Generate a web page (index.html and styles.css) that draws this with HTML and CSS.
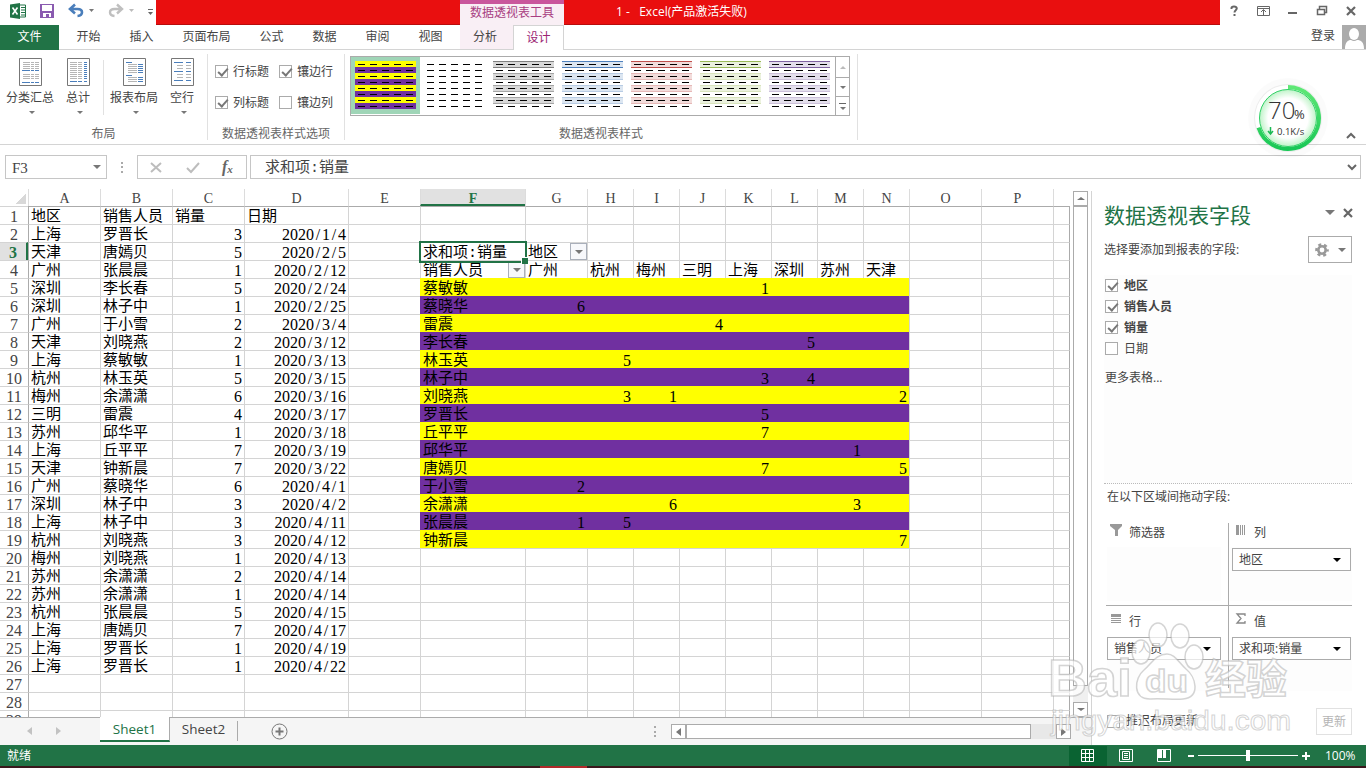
FILE: index.html
```html
<!DOCTYPE html>
<html lang="zh-CN">
<head>
  <meta charset="UTF-8" />
  <title>1 - Excel</title>
  <link rel="stylesheet" href="styles.css">
</head>
<body>

  <!-- Title bar -->
  <header class="titlebar">
    <div class="quick">
      <svg width="156" height="25" viewBox="0 0 156 25">
        <path d="M10 4.500 20 3v16l-10-1.500z" fill="#217346"/>
        <path d="M20 5h5.500v12H20" fill="#fff" stroke="#217346"/>
        <path d="M21 7.500h4M21 10h4M21 12.500h4M21 15h4" stroke="#217346"/>
        <path d="m12.500 7.500 5 7M17.500 7.500l-5 7" stroke="#fff" stroke-width="1.600"/>
        <path d="M40 4h14v14H40z" fill="#8a5bb0"/>
        <path d="M42 5h10v6H42zM43 13h8v4h-2v-3h-3v3h-3z" fill="#fff"/>
        <path d="M75 4.500 70 9l5 4.500M70.500 9h7c6 0 6 6.500 0 7" fill="none" stroke="#4a7ebb" stroke-width="2.600"/>
        <path d="M89 9h5l-2.500 3z" fill="#777"/>
        <path d="m117 4.500 5 4.500-5 4.500M121.500 9h-7c-6 0-6 6.500 0 7" fill="none" stroke="#bfbfbf" stroke-width="2.400"/>
        <path d="M129 9h5l-2.500 3z" fill="#bbb"/>
        <path d="M148 9.500h5" stroke="#666"/>
        <path d="M148 12h5l-2.500 3z" fill="#666"/>
      </svg>
    </div>
    <div class="caption">
      <div class="context-title">数据透视表工具</div>
      <span class="doc-name">1 -&nbsp;&nbsp; Excel(产品激活失败)</span>
    </div>
    <svg class="window-buttons" width="146" height="25" viewBox="1220 0 146 25" fill="none" stroke="#666">
      <path d="M1231.500 9V8q0-1.500 2.500-1.500t2.800 1.800c0 2-2.300 1.800-2.300 4.200M1234.500 14v2" stroke-width="2"/>
      <path d="M1257.500 6.500h12v9h-12zM1257.500 8.500h12M1263.500 15v-5M1261 12l2.500-2.500 2.500 2.500"/>
      <path d="M1288 13h9" stroke-width="2"/>
      <path d="M1317.500 9.500h7v5h-7zM1319.500 9V6.500h7v6H1325" stroke-width="1.500"/>
      <path d="m1347 7 8 8M1355 7l-8 8" stroke-width="2.200"/>
    </svg>
  </header>

  <nav class="tabs">
    <div class="tab file">文件</div>
    <div class="tab">开始</div>
    <div class="tab">插入</div>
    <div class="tab wide">页面布局</div>
    <div class="tab">公式</div>
    <div class="tab">数据</div>
    <div class="tab">审阅</div>
    <div class="tab">视图</div>
    <div class="tab context">分析</div>
    <div class="tab active">设计</div>
    <div class="login">登录</div>
    <svg class="avatar" width="24" height="24" viewBox="0 0 24 24">
      <path d="M0 0h24v24H0z" fill="#ababab"/>
      <ellipse cx="12" cy="9" rx="5" ry="6" fill="#fff"/>
      <path d="M3 24c0-7 3-9 6-9q3 2 6 0c4 0 7 2 7 9z" fill="#fff"/>
    </svg>
  </nav>

  <!-- Ribbon -->
  <section class="ribbon">
    <div class="group layout-group">
      <div class="group-body">
        <div class="big-btn w60">
          <svg width="23" height="28" viewBox="0 0 23 28"><path class="page" d="M.5.500h22v27H.5z"/><path class="lines" d="M4 4.500h7M12 4.500h3M16 4.500h4M4 6.500h7M12 6.500h3M16 6.500h4M4 8.500h7M12 8.500h3M16 8.500h4M4 10.500h7M12 10.500h3M16 10.500h4M4 16.500h7M12 16.500h3M16 16.500h4M4 18.500h7M12 18.500h3M16 18.500h4M4 20.500h7M12 20.500h3M16 20.500h4"/><path class="accent" d="M3 12.500h8M12 12.500h3M16 12.500h4M3 24.500h8M12 24.500h3M16 24.500h4"/></svg>
          <span>分类汇总</span><i class="down"></i>
        </div>
        <div class="big-btn w36">
          <svg width="23" height="28" viewBox="0 0 23 28"><path class="page" d="M.5.500h22v27H.5z"/><path class="lines" d="M3 4.500h7M11 4.500h4M3 6.500h7M11 6.500h4M3 8.500h7M11 8.500h4M3 10.500h7M11 10.500h4M3 12.500h7M11 12.500h4M3 14.500h7M11 14.500h4M3 16.500h7M11 16.500h4M3 18.500h7M11 18.500h4M3 20.500h7M11 20.500h4"/><path class="accent" d="M3 23.500h7M11 23.500h4M17 4.500h3M17 6.500h3M17 8.500h3M17 10.500h3M17 12.500h3M17 14.500h3M17 16.500h3M17 18.500h3M17 20.500h3M17 23.500h3"/></svg>
          <span>总计</span><i class="down"></i>
        </div>
        <div class="divider"></div>
        <div class="big-btn w60">
          <svg width="23" height="28" viewBox="0 0 23 28"><path class="page" d="M.5.500h22v27H.5z"/><path class="lines" d="M5 6.500h9M5 8.500h9M5 10.500h9M5 12.500h9M5 14.500h9M5 19.500h9M5 21.500h9M5 23.500h9"/><path class="accent" d="M3 4.500h6M3 17.500h6M15 6.500h5M15 8.500h5M15 10.500h5M15 12.500h5M15 14.500h5M15 19.500h5M15 21.500h5M15 23.500h5"/></svg>
          <span>报表布局</span><i class="down"></i>
        </div>
        <div class="big-btn w36">
          <svg width="23" height="28" viewBox="0 0 23 28"><path class="page" d="M.5.500h22v27H.5z"/><path class="lines" d="M6 7.500h6M15 7.500h5M6 10.500h6M15 10.500h5M6 16.500h6M15 16.500h5M6 19.500h6M15 19.500h5"/><path class="accent" d="M3 4.500h9M15 4.500h5M3 13.500h9M15 13.500h5M3 22.500h9M15 22.500h5"/></svg>
          <span>空行</span><i class="down"></i>
        </div>
      </div>
      <div class="group-label">布局</div>
    </div>

    <div class="group options-group">
      <div class="group-body options">
        <label><b class="check on"></b>行标题</label>
        <label><b class="check on"></b>镶边行</label>
        <label><b class="check on"></b>列标题</label>
        <label><b class="check"></b>镶边列</label>
      </div>
      <div class="group-label">数据透视表样式选项</div>
    </div>

    <div class="group styles-group">
      <div class="group-body">
        <div class="gallery">
          <div class="gallery-items" id="gallery"></div>
          <div class="gallery-scroll">
            <span class="off"><i class="up"></i></span>
            <span><i class="down"></i></span>
            <span><i class="down more"></i></span>
          </div>
        </div>
      </div>
      <div class="group-label">数据透视表样式</div>
    </div>
    <svg class="collapse" width="10" height="8" viewBox="0 0 10 8"><path d="m1 6 4-4 4 4" fill="none" stroke="#666" stroke-width="2"/></svg>
  </section>

  <!-- Formula bar -->
  <section class="formula-bar">
    <div class="name-box">F3<i class="down"></i></div>
    <div class="grip"></div>
    <div class="fx-box">
      <svg width="108" height="23" viewBox="0 0 108 23" fill="none" stroke="#bdbdbd" stroke-width="2">
        <path d="m13 7 10 9M23 7l-10 9"/>
        <path d="m49 12 4 4 8-9"/>
      </svg>
      <em>f<sub>x</sub></em>
    </div>
    <div class="formula"><span>求和项:销量</span>
      <svg width="10" height="8" viewBox="0 0 10 8"><path d="m1 2 4 4 4-4" fill="none" stroke="#666" stroke-width="2"/></svg>
    </div>
  </section>

  <main class="work">
    <div class="book">
      <div class="sheet-row">
        <div class="sheet" id="sheet"></div>
        <div class="vscroll">
          <span><i class="up"></i></span>
          <div class="thumb"></div>
          <div class="track"></div>
          <span><i class="down"></i></span>
        </div>
      </div>
      <div class="sheet-tabs">
        <div class="nav-arrows"><i class="left"></i><i class="right"></i></div>
        <div class="sheet-tab active">Sheet1</div>
        <div class="sheet-tab">Sheet2</div>
        <svg class="add" width="17" height="17" viewBox="0 0 17 17" fill="none" stroke="#777"><circle cx="8.500" cy="8.500" r="7.500"/><path d="M4.500 8.500h8M8.500 4.500v8" stroke-width="2"/></svg>
        <div class="grip"></div>
        <div class="hscroll">
          <span><i class="left"></i></span>
          <div class="thumb"></div>
          <div class="track"></div>
          <span><i class="right"></i></span>
        </div>
      </div>
    </div>

    <!-- Field list -->
    <aside class="pane">
      <div class="pane-head">
        <h2>数据透视表字段</h2>
        <i class="down wide"></i>
        <svg width="10" height="10" viewBox="0 0 10 10"><path d="m1 1 8 8M9 1 1 9" stroke="#666" stroke-width="2.200"/></svg>
      </div>
      <div class="pane-sub">
        <span>选择要添加到报表的字段:</span>
        <div class="gear">
          <svg width="14" height="14" viewBox="0 0 14 14" fill="none" stroke="#999"><circle cx="7" cy="7" r="3.700" stroke-width="2.600"/><circle cx="7" cy="7" r="5.600" stroke-width="2.400" stroke-dasharray="3 2.864" stroke-dashoffset="1.500"/></svg>
          <i class="down big"></i>
        </div>
      </div>
      <div class="fields">
        <label class="strong"><b class="check on"></b>地区</label>
        <label class="strong"><b class="check on"></b>销售人员</label>
        <label class="strong"><b class="check on"></b>销量</label>
        <label><b class="check"></b>日期</label>
        <p>更多表格...</p>
      </div>
      <div class="drag-title">在以下区域间拖动字段:</div>
      <div class="areas">
        <div class="area">
          <h3><svg width="12" height="12" viewBox="0 0 12 12"><path d="M0 0h12v2L8 6v6H5V6L0 2z" fill="#999"/></svg>筛选器</h3>
          <div class="drop"></div>
        </div>
        <div class="area">
          <h3><svg width="12" height="12" viewBox="0 0 12 12"><path d="M1 1h3v10H1zM5 1h1v10H5zM7 1h1v10H7zM9 1h1v10H9z" fill="#999"/></svg>列</h3>
          <div class="drop"><div class="pill">地区<i class="down big"></i></div></div>
        </div>
        <div class="area">
          <h3><svg width="12" height="12" viewBox="0 0 12 12"><path d="M1 1h10v3H1zM1 5h10v1H1zM1 7h10v1H1zM1 9h10v1H1z" fill="#999"/></svg>行</h3>
          <div class="drop"><div class="pill">销售人员<i class="down big"></i></div></div>
        </div>
        <div class="area">
          <h3><svg width="12" height="12" viewBox="0 0 12 12"><path d="M10 3V1H2l4 4.500L2 10h8V8" fill="none" stroke="#888" stroke-width="1.300"/></svg>值</h3>
          <div class="drop"><div class="pill">求和项:销量<i class="down big"></i></div></div>
        </div>
      </div>
      <div class="pane-foot">
        <label><b class="check"></b>推迟布局更新</label>
        <div class="update">更新</div>
      </div>
    </aside>
  </main>

  <footer class="status">
    <span>就绪</span>
    <svg width="245" height="21" viewBox="1068 745 245 21" fill="none" stroke="#fff">
      <path d="M1069 746h38v20h-38z" fill="#0a6332" stroke="none"/>
      <path d="M1081.500 749.500h12v12h-12zM1081.500 753.500h12M1081.500 757.500h12M1085.500 749.500v12M1089.500 749.500v12"/>
      <path d="M1119.500 749.500h13v12h-13zM1122.500 751.500h7v8h-7zM1124 753.500h4M1124 755.500h4M1124 757.500h4"/>
      <path d="M1157.500 749.500h13v12h-13z"/>
      <path d="M1158 750h4v8h-4zM1163 750h3v8h-3z" fill="#fff" stroke="none"/>
      <path d="M1188 756h6M1302 756h8M1306 752v8" stroke-width="2"/>
      <path d="M1198 755.500h100"/>
      <path d="M1246 750h4v11h-4z" fill="#fff" stroke="none"/>
    </svg>
    <span class="zoom">100%</span>
  </footer>
  <div class="taskbar"></div>

  <!-- Network speed ball -->
  <svg class="speed" width="84" height="84" viewBox="0 0 84 84">
    <defs>
      <linearGradient id="ring" x1="0" y1="0" x2="0" y2="1"><stop offset="0" stop-color="#5fe876"/><stop offset="1" stop-color="#18c755"/></linearGradient>
      <radialGradient id="ball"><stop offset=".7" stop-color="#fff"/><stop offset="1" stop-color="#bff3c8"/></radialGradient>
    </defs>
    <circle cx="42" cy="42" r="40" fill="#000" opacity=".015"/>
    <circle cx="42" cy="42" r="34" fill="#000" opacity=".06"/>
    <circle cx="42" cy="42" r="33" fill="#fff"/>
    <circle cx="42" cy="42" r="28.500" fill="url(#ball)" stroke="#2fd165"/>
    <path d="M42 11a31 31 0 1 1-29.500 40.600" fill="none" stroke="url(#ring)" stroke-width="4"/>
    <text class="speed-num" x="22" y="43">70</text>
    <text class="speed-pct" x="48" y="43">%</text>
    <path d="M24.500 51v6M22 55l2.500 3 2.500-3" fill="none" stroke="#1bb954" stroke-width="1.500"/>
    <text class="speed-rate" x="31" y="59">0.1K/s</text>
  </svg>

  <!-- Watermark -->
  <svg class="watermark" width="260" height="130" viewBox="1040 615 260 130">
    <g class="mark">
      <text x="1048" y="696" font-size="52" textLength="84" lengthAdjust="spacingAndGlyphs">Bai</text>
      <ellipse cx="1158" cy="635" rx="9" ry="12"/>
      <ellipse cx="1180" cy="636" rx="9" ry="12"/>
      <ellipse cx="1141" cy="652" rx="9" ry="12"/>
      <ellipse cx="1194" cy="657" rx="9" ry="12"/>
      <path d="M1167 654c8 0 11 8 19 15 10 8 15 28-3 30-8 1-24-1-32 0-19 1-17-21-7-29 8-7 12-16 23-16z"/>
      <text x="1145" y="692" font-size="32" textLength="43" lengthAdjust="spacingAndGlyphs">du</text>
      <text class="cjk" x="1205" y="694" font-size="41">经验</text>
      <text class="url" x="1051" y="730" font-size="28" textLength="240" lengthAdjust="spacingAndGlyphs">jingyan.baidu.com</text>
    </g>
  </svg>

  <script>
    // Source table, columns A-D
    const rows = [
      ["地区", "销售人员", "销量", "日期"],
      ["上海", "罗晋长", 3, "2020/1/4"],
      ["天津", "唐嫣贝", 5, "2020/2/5"],
      ["广州", "张晨晨", 1, "2020/2/12"],
      ["深圳", "李长春", 5, "2020/2/24"],
      ["深圳", "林子中", 1, "2020/2/25"],
      ["广州", "于小雪", 2, "2020/3/4"],
      ["天津", "刘晓燕", 2, "2020/3/12"],
      ["上海", "蔡敏敏", 1, "2020/3/13"],
      ["杭州", "林玉英", 5, "2020/3/15"],
      ["梅州", "余潇潇", 6, "2020/3/16"],
      ["三明", "雷震", 4, "2020/3/17"],
      ["苏州", "邱华平", 1, "2020/3/18"],
      ["上海", "丘平平", 7, "2020/3/19"],
      ["天津", "钟新晨", 7, "2020/3/22"],
      ["广州", "蔡晓华", 6, "2020/4/1"],
      ["深圳", "林子中", 3, "2020/4/2"],
      ["上海", "林子中", 3, "2020/4/11"],
      ["杭州", "刘晓燕", 3, "2020/4/12"],
      ["梅州", "刘晓燕", 1, "2020/4/13"],
      ["苏州", "余潇潇", 2, "2020/4/14"],
      ["苏州", "余潇潇", 1, "2020/4/14"],
      ["杭州", "张晨晨", 5, "2020/4/15"],
      ["上海", "唐嫣贝", 7, "2020/4/17"],
      ["上海", "罗晋长", 1, "2020/4/19"],
      ["上海", "罗晋长", 1, "2020/4/22"]
    ];

    // Pivot rows start at sheet row 5
    const pivot = [
      ["蔡敏敏", { K: 1 }],
      ["蔡晓华", { G: 6 }],
      ["雷震", { J: 4 }],
      ["李长春", { L: 5 }],
      ["林玉英", { H: 5 }],
      ["林子中", { K: 3, L: 4 }],
      ["刘晓燕", { H: 3, I: 1, N: 2 }],
      ["罗晋长", { K: 5 }],
      ["丘平平", { K: 7 }],
      ["邱华平", { M: 1 }],
      ["唐嫣贝", { K: 7, N: 5 }],
      ["于小雪", { G: 2 }],
      ["余潇潇", { I: 6, M: 3 }],
      ["张晨晨", { G: 1, H: 5 }],
      ["钟新晨", { N: 7 }]
    ];
    const heads = { F: "销售人员", G: "广州", H: "杭州", I: "梅州", J: "三明", K: "上海", L: "深圳", M: "苏州", N: "天津" };
    const cols = "ABCDEFGHIJKLMNOP".split("").concat("");

    let html = '<div class="corner"></div>';
    cols.forEach(c => html += `<div class="col-head${c === "F" ? " sel" : ""}">${c}</div>`);
    for (let r = 1; r <= 29; r++) {
      html += `<div class="row-head${r === 3 ? " sel" : ""}">${r}</div>`;
      cols.forEach((c, i) => {
        let text = "", cls = "cell", extra = "";
        if (r === 1) cls += " first-row";
        if (i === 0) cls += " first-col";
        if (c === "") cls += " last-col";
        if (i < 4 && rows[r - 1]) {
          text = rows[r - 1][i];
          if (r > 1 && i > 1) cls += " num";
          // keep the slashes on the same 8px pitch as the digits
          if (r > 1 && i === 3) text = text.replace(/\//g, "<s>/</s>");
        }
        if (r === 3 && c === "F") {
          text = "求和项:销量";
          extra = '<div class="selection"></div>';
        }
        if (r === 3 && c === "G") text = "地区";
        if (r === 4 && heads[c]) text = heads[c];
        if ((r === 3 && c === "G") || (r === 4 && c === "F")) extra = '<span class="filter"><i class="down"></i></span>';
        if (r >= 5 && r <= 19 && i >= 5 && i <= 13) {
          const p = pivot[r - 5];
          cls += r % 2 ? " yellow" : " purple";
          if (c === "F") text = p[0];
          else {
            text = p[1][c] || "";
            cls += " num";
          }
        }
        html += `<div class="${cls}">${text}${extra}</div>`;
      });
    }
    document.getElementById("sheet").innerHTML = html;

    // Style gallery thumbnails
    const names = ["picked", "plain", "grey", "blue", "red", "green", "violet"];
    document.getElementById("gallery").innerHTML = names.map(n =>
      `<div class="thumbnail ${n}">${'<div class="stripe"><i></i><i></i><i></i><i></i><i></i></div>'.repeat(8)}</div>`
    ).join("");
  </script>
</body>
</html>
```
FILE: styles.css
```css
* {
  box-sizing: border-box;
}
body {
  margin: 0;
  width: 1366px;
  height: 768px;
  overflow: hidden;
  position: relative;
  display: flex;
  flex-direction: column;
  background: #fff;
  color: #444;
  font-family: "Open Sans", "Noto Sans CJK SC", sans-serif;
  font-size: 12px;
  line-height: 16px;
}
svg {
  display: block;
  flex: none;
}

/* small triangles */
.down, .up, .left, .right {
  display: block;
  flex: none;
  width: 0;
  height: 0;
  border: 3px solid transparent;
}
.down {
  border-top-color: #777;
  border-bottom: 0;
}
.down.big {
  border-width: 4px 4px 0;
}
.down.wide {
  border-width: 5px 5px 0;
}
.up {
  border-bottom-color: #777;
  border-top: 0;
}
.left {
  border-width: 4px 5px 4px 0;
  border-right-color: #777;
}
.right {
  border-width: 4px 0 4px 5px;
  border-left-color: #777;
}

/* title bar */
.titlebar {
  display: flex;
  height: 25px;
}
.caption {
  width: 1064px;
  background: #e90f0f;
  border-bottom: 1px solid #b80c0c;
  display: flex;
  padding-left: 304px;
}
.context-title {
  width: 104px;
  height: 25px;
  background: #f9eff5;
  border-top: 4px solid #c9569c;
  color: #a83e82;
  text-align: center;
  line-height: 18px;
}
.doc-name {
  margin-left: 52px;
  color: #fff;
  line-height: 24px;
}

.tabs {
  display: flex;
  height: 25px;
  border-bottom: 1px solid #d4d4d4;
}
.tab {
  width: 53px;
  height: 24px;
  text-align: center;
  line-height: 24px;
}
.tab.wide {
  width: 77px;
}
.tab.file {
  width: 59px;
  height: 25px;
  margin-right: 3px;
  background: #217346;
  color: #fff;
}
.tab.context {
  margin-left: 3px;
  padding-right: 3px;
  background: #f9eff5;
}
.tab.active {
  width: 51px;
  height: 25px;
  background: #fff;
  border: 1px solid #d4d4d4;
  border-bottom: 0;
  color: #9b2372;
  line-height: 23px;
}
.login {
  margin-left: auto;
  margin-right: 7px;
  line-height: 22px;
}

/* ribbon */
.ribbon {
  display: flex;
  height: 95px;
  border-bottom: 1px solid #d4d4d4;
  padding-top: 4px;
}
.group {
  height: 86px;
  border-right: 1px solid #e1e1e1;
}
.layout-group {
  width: 208px;
}
.options-group {
  width: 137px;
}
.styles-group {
  width: 513px;
}
.group-body {
  display: flex;
  height: 71px;
}
.group-label {
  text-align: center;
  color: #666;
  line-height: 18px;
}
.big-btn {
  display: flex;
  flex-direction: column;
  align-items: center;
  padding-top: 4px;
  white-space: nowrap;
}
.big-btn span {
  margin-top: 4px;
  line-height: 16px;
}
.big-btn .down {
  margin: 5px 0 0 4px;
}
.w60 {
  width: 60px;
}
.w36 {
  width: 36px;
}
.page {
  fill: #fff;
  stroke: #777;
}
.lines {
  stroke: #b5b5b5;
}
.accent {
  stroke: #4a7ebb;
}
.divider {
  width: 1px;
  height: 55px;
  margin: 6px 0 0 7px;
  background: #e1e1e1;
}
.options {
  display: grid;
  grid-template-columns: 64px 60px;
  grid-template-rows: 31px 31px;
  padding: 2px 0 0 7px;
}
label {
  display: flex;
  align-items: center;
  gap: 5px;
  white-space: nowrap;
}
.check {
  width: 13px;
  height: 13px;
  flex: none;
  border: 1px solid #ababab;
  background: #fff;
}
.check.on::before {
  content: "";
  display: block;
  width: 8px;
  height: 4px;
  margin: 2px 0 0 1.500px;
  border: solid #777;
  border-width: 0 0 2px 2px;
  transform: rotate(-48deg);
}
.gallery {
  display: flex;
  width: 500px;
  height: 60px;
  margin: 2px 0 0 5px;
  border: 1px solid #ababab;
}
.gallery-items {
  display: flex;
  width: 484px;
}
.thumbnail {
  width: 69px;
  height: 57px;
  padding: 4px;
}
.thumbnail.picked {
  background: #9fd5b7;
}
.stripe {
  height: 6px;
  display: flex;
  gap: 5px;
  padding: 2px 3px 0;
  border: solid transparent;
  border-width: 1px 0 0;
}
.stripe i {
  width: 7px;
  height: 1px;
  background: #000;
}
.stripe:nth-child(odd) {
  height: 7px;
  margin-bottom: -1px;
  border-bottom-width: 1px;
}
.picked .stripe {
  background: #7030a0;
  border: 0;
  padding-top: 3px;
}
.picked .stripe:nth-child(odd) {
  height: 6px;
  margin: 0;
  background: #ff0;
}
.grey .stripe:nth-child(odd) {
  background: #d9d9d9;
  border-color: #a6a6a6;
}
.grey .stripe:first-child {
  border-color: #808080;
}
.blue .stripe:nth-child(odd) {
  background: #dce6f1;
  border-color: #b8cce4;
}
.blue .stripe:first-child {
  border-color: #4f81bd;
}
.red .stripe:nth-child(odd) {
  background: #f2dcdb;
  border-color: #e6b8b7;
}
.red .stripe:first-child {
  border-color: #c0504d;
}
.green .stripe:nth-child(odd) {
  background: #ebf1de;
  border-color: #d8e4bc;
}
.green .stripe:first-child {
  border-color: #9bbb59;
}
.violet .stripe:nth-child(odd) {
  background: #e4dfec;
  border-color: #ccc0da;
}
.violet .stripe:first-child {
  border-color: #8064a2;
}
.gallery-scroll {
  width: 14px;
  border-left: 1px solid #ababab;
}
.gallery-scroll span {
  display: flex;
  height: 19px;
  align-items: center;
  justify-content: center;
  border-top: 1px solid #ababab;
}
.gallery-scroll .off {
  height: 20px;
  border: 0;
  opacity: .5;
}
.more {
  position: relative;
  top: 2px;
}
.more::before {
  content: "";
  position: absolute;
  left: -4px;
  top: -7px;
  width: 7px;
  height: 1px;
  background: #666;
}
.collapse {
  margin: 78px 10px 0 auto;
}

/* formula bar */
.formula-bar {
  display: flex;
  height: 44px;
  padding: 10px 5px 9px;
  font-family: "Liberation Mono", "Noto Sans CJK SC", monospace;
  font-size: 15px;
}
.name-box, .fx-box, .formula {
  display: flex;
  align-items: center;
  height: 24px;
  border: 1px solid #c6c6c6;
}
.name-box {
  width: 102px;
  padding: 2px 6px 0;
  justify-content: space-between;
  font-family: "Liberation Serif", serif;
  font-size: 15px;
}
.name-box .down {
  border-width: 4px 4px 0;
  margin: -3px -1px 0 0;
}
.grip {
  width: 3px;
  height: 11px;
  background: repeating-linear-gradient(#aaa 0 2px, transparent 2px 4.500px);
}
.formula-bar .grip {
  width: 2px;
  margin: 7px 14px 0 14px;
}
.fx-box {
  width: 110px;
  margin-right: 3px;
}
.fx-box em {
  margin-left: -24px;
  font: italic bold 16px "Liberation Serif", serif;
  color: #666;
}
.fx-box sub {
  font-size: 11px;
  vertical-align: -1px;
}
.formula {
  flex: 1;
  padding: 0 3px 0 14px;
  justify-content: space-between;
}
.formula span {
  padding-top: 3px;
}

/* workbook */
.work {
  display: flex;
  height: 556px;
}
.book {
  width: 1091px;
}
.sheet-row {
  display: flex;
  height: 528px;
}
.sheet {
  width: 1070px;
  height: 528px;
  overflow: hidden;
  display: grid;
  grid-template-columns: 28px 72px 72px 72px 104px 72px 105px 62px repeat(7, 46px) 72px 72px 17px;
  grid-template-rows: 17px repeat(29, 18px);
  color: #000;
}
.corner {
  background: linear-gradient(135deg, transparent 50%, #d8d8d8 50%) 15px 4px / 11px 11px no-repeat;
}
.col-head {
  border-left: 1px solid #dcdcdc;
  text-align: center;
  color: #444;
  font: 14px/20px "Liberation Serif", serif;
}
.col-head.sel {
  background: #e1e1e1;
  border-bottom: 2px solid #217346;
  color: #217346;
  font-weight: bold;
}
.row-head {
  border-top: 1px solid #d4d4d4;
  text-align: center;
  color: #444;
  font: 16px/20px "Liberation Serif", serif;
}
.row-head.sel {
  background: #e1e1e1;
  border-right: 2px solid #217346;
  color: #217346;
  font-weight: bold;
}
.cell {
  position: relative;
  border-left: 1px solid #d4d4d4;
  border-top: 1px solid #d4d4d4;
  padding-left: 2px;
  white-space: nowrap;
  font: 15px/21px "Liberation Mono", "Noto Sans CJK SC", monospace;
}
.last-col {
  border-right: 1px solid #ababab;
}
.first-col {
  border-left-color: #ababab;
}
.first-row {
  border-top-color: #ababab;
}
.cell.num {
  padding: 0 2px 0 0;
  text-align: right;
  font: 16px/20px "Liberation Serif", serif;
}
.num s {
  display: inline-block;
  width: 8px;
  text-align: center;
  text-decoration: none;
}
.cell.yellow {
  background: #ff0;
  border-color: #ff0;
}
.cell.purple {
  background: #7030a0;
  border-color: #7030a0;
}
.selection {
  position: absolute;
  inset: -2px -2px -3px -2px;
  border: 2px solid #217346;
  z-index: 2;
}
.selection::after {
  content: "";
  position: absolute;
  right: -3px;
  bottom: -3px;
  width: 6px;
  height: 6px;
  background: #217346;
  border: solid #fff;
  border-width: 1px 0 0 1px;
}
.filter {
  position: absolute;
  right: 0;
  top: 0;
  width: 17px;
  height: 17px;
  display: flex;
  align-items: center;
  justify-content: center;
  border: 1px solid #a9afba;
  background: #f7f8fb;
}
.filter .down {
  border-width: 4px 4px 0;
}
.vscroll {
  width: 15px;
  height: 526px;
  margin: 2px 0 0 3px;
  display: flex;
  flex-direction: column;
  background: #f0f0f0;
}
.vscroll span, .hscroll span {
  width: 15px;
  height: 15px;
  flex: none;
  display: flex;
  align-items: center;
  justify-content: center;
  background: #fff;
  border: 1px solid #ababab;
}
.vscroll .up, .vscroll .down {
  border-left-width: 4px;
  border-right-width: 4px;
}
.vscroll .thumb {
  height: 480px;
  background: #fff;
  border: 1px solid #ababab;
}
.track {
  flex: 1;
}

.sheet-tabs {
  display: flex;
  height: 28px;
  background: #f5f5f5;
  border-top: 1px solid #ababab;
  font-size: 13.500px;
}
.nav-arrows {
  width: 100px;
  padding: 9px 0 0 27px;
  display: flex;
  gap: 24px;
  opacity: .4;
}
.sheet-tab {
  width: 68px;
  height: 20px;
  margin-top: 3px;
  border-right: 1px solid #ababab;
  text-align: center;
  line-height: 17px;
}
.sheet-tab.active {
  width: 70px;
  height: 25px;
  margin-top: -1px;
  background: #fff;
  border-bottom: 2px solid #217346;
  color: #217346;
  line-height: 25px;
}
.add {
  margin: 5px 0 0 33px;
}
.sheet-tabs .grip {
  width: 2px;
  margin: 8px 15px 0 366px;
}
.hscroll {
  width: 400px;
  height: 15px;
  margin-top: 6px;
  display: flex;
  background: #e8e8e8;
}
.hscroll .thumb {
  width: 345px;
  background: #fff;
  border: 1px solid #ababab;
}

/* field pane */
.pane {
  width: 275px;
  height: 554px;
  margin-top: 2px;
  border-left: 1px solid #d4d4d4;
  padding: 0 14px 0 12px;
}
.pane-head {
  display: flex;
  align-items: center;
  height: 43px;
  margin-right: -1px;
}
.pane-head h2 {
  margin: 5px auto 0 0;
  font-size: 21px;
  line-height: 28px;
  font-weight: normal;
  color: #217346;
}
.pane-head .down {
  margin-right: 8px;
}
.pane-sub {
  display: flex;
  justify-content: space-between;
  height: 41px;
  padding-top: 2px;
}
.pane-sub span {
  line-height: 28px;
}
.gear {
  width: 44px;
  height: 27px;
  display: flex;
  align-items: center;
  justify-content: center;
  gap: 9px;
  border: 1px solid #ababab;
}
.fields {
  height: 209px;
  background: #fdfdfd;
  padding: 0 0 0 1px;
  border-bottom: 1px dotted #bbb;
}
.fields label {
  height: 21px;
  gap: 6px;
}
.fields p {
  margin: 11px 0 0;
}
.strong {
  font-weight: bold;
}
.drag-title {
  padding: 5px 0 0 3px;
  height: 39px;
}
.areas {
  display: grid;
  grid-template-columns: 123px 123px;
  grid-template-rows: 83px 82px;
  margin-left: 2px;
}
.area {
  padding: 0 0 0 1px;
}
.area:nth-child(odd) {
  border-right: 1px solid #ababab;
  padding-right: 7px;
}
.area:nth-child(-n + 2) {
  border-bottom: 1px solid #ababab;
}
.area h3 {
  display: flex;
  gap: 7px;
  margin: 0;
  height: 24px;
  padding: 1px 0 0 3px;
  font-size: 12px;
  font-weight: normal;
  line-height: 18px;
}
.area:nth-child(even) h3 {
  padding-left: 5px;
}
.area:nth-child(n + 3) h3 {
  padding-top: 7px;
  height: 31px;
}
.drop {
  height: 54px;
  background: #fdfdfd;
}
.area:nth-child(2) .drop, .area:nth-child(4) .drop {
  padding: 0 1px 0 2px;
}
.pill {
  height: 23px;
  display: flex;
  align-items: center;
  justify-content: space-between;
  padding: 0 9px 0 6px;
  border: 1px solid #ababab;
  background: #fff;
}
.pill .down {
  border-top-color: #000;
}
.area:nth-child(2) .pill {
  position: relative;
  top: 1px;
}
.pane-foot {
  display: flex;
  justify-content: space-between;
  margin-top: 20px;
  padding-left: 3px;
}
.pane-foot label {
  height: 26px;
  gap: 6px;
}
.update {
  width: 36px;
  height: 27px;
  border: 1px solid #e1e1e1;
  color: #b5b5b5;
  text-align: center;
  line-height: 26px;
}

/* status bar */
.status {
  display: flex;
  height: 21px;
  padding-left: 7px;
  background: #217346;
  color: #fff;
  line-height: 21px;
}
.status svg {
  margin-left: auto;
}
.zoom {
  width: 53px;
  padding-left: 12px;
}
.taskbar {
  height: 2px;
  background: linear-gradient(90deg, #3a181c 540px, #b02a2a 540px 587px, #3a181c 587px);
}

.speed {
  position: absolute;
  left: 1246px;
  top: 76px;
}
.speed-num {
  font: 300 24px "Open Sans", sans-serif;
  fill: #333;
}
.speed-pct {
  font: 13px "Open Sans", sans-serif;
  fill: #333;
}
.speed-rate {
  font: 9.500px "Open Sans", sans-serif;
  fill: #333;
}

.watermark {
  position: absolute;
  left: 1040px;
  top: 615px;
  z-index: 5;
}
.mark {
  fill: rgba(255, 255, 255, .7);
  stroke: rgba(170, 170, 170, .5);
  stroke-width: 1.500;
  font-family: "Liberation Sans", sans-serif;
  font-weight: bold;
}
.mark .cjk {
  font-family: "Noto Sans CJK SC", sans-serif;
}
.mark .url {
  font-weight: normal;
  stroke-width: 1;
}
```
